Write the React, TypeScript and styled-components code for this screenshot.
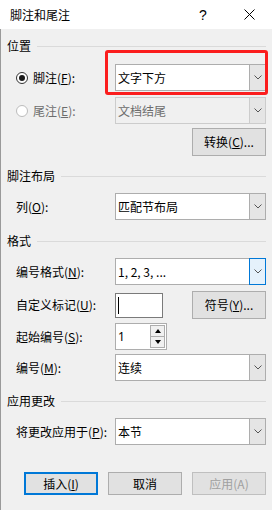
import React from "react";
import styled, { createGlobalStyle } from "styled-components";

const Global = createGlobalStyle`
  html, body { margin: 0; padding: 0; background: #f0f0f0; }
  * { box-sizing: border-box; }
`;

const Dialog = styled.div`
  position: relative;
  width: 272px;
  height: 510px;
  background: #f0f0f0;
  font-family: "Noto Sans CJK SC", "Noto Sans", sans-serif;
  font-size: 12px;
  color: #000;
  overflow: hidden;
`;

const TitleBar = styled.div`
  height: 29px;
  background: #fff;
  display: flex;
  align-items: center;
  padding-left: 10px;
`;

const Title = styled.span`
  flex: 1;
  font-size: 12px;
  line-height: 14px;
`;

const TitleButton = styled.span`
  width: 46px;
  height: 29px;
  display: flex;
  align-items: center;
  justify-content: center;
  font-family: "Liberation Sans", sans-serif;
  font-size: 14px;
`;

const Body = styled.div`
  height: 481px;
  border-left: 1px solid #9a9a9a;
  padding: 9px 6px 0 6px;
  display: flex;
  flex-direction: column;
`;

const SectionHeader = styled.div<{ $mt: number }>`
  display: flex;
  align-items: center;
  gap: 6px;
  height: 16px;
  margin-top: ${(p) => p.$mt}px;
  line-height: 16px;
  &::after {
    content: "";
    flex: 1;
    height: 1px;
    background: #dadada;
  }
`;

const Row = styled.div<{ $mt: number; $h?: number }>`
  display: grid;
  grid-template-columns: 108px 151px;
  align-items: center;
  height: ${(p) => p.$h ?? 27}px;
  margin-top: ${(p) => p.$mt}px;
`;

const Label = styled.span<{ $disabled?: boolean }>`
  display: flex;
  align-items: center;
  gap: 5px;
  padding-left: 9px;
  line-height: 14px;
  white-space: nowrap;
  color: ${(p) => (p.$disabled ? "#6d6d6d" : "#000")};
`;

const U = styled.span`
  text-decoration: underline;
  text-underline-offset: 1px;
`;

const Radio = styled.span<{ $checked?: boolean; $disabled?: boolean }>`
  position: relative;
  width: 12px;
  height: 12px;
  border-radius: 50%;
  background: #fff;
  border: 1px solid ${(p) => (p.$disabled ? "#bcbcbc" : "#333")};
  &::after {
    content: "";
    display: ${(p) => (p.$checked ? "block" : "none")};
    position: absolute;
    left: 2px;
    top: 2px;
    width: 6px;
    height: 6px;
    border-radius: 50%;
    background: #1a1a1a;
  }
`;

const Select = styled.div<{ $disabled?: boolean }>`
  display: flex;
  height: 27px;
  border: 1px solid ${(p) => (p.$disabled ? "#cccccc" : "#adadad")};
  background: ${(p) => (p.$disabled ? "#f0f0f0" : "#fff")};
  color: ${(p) => (p.$disabled ? "#6d6d6d" : "#000")};
`;

const SelectText = styled.span`
  flex: 1;
  display: flex;
  align-items: center;
  padding-left: 2px;
  line-height: 14px;
  white-space: nowrap;
`;

const ArrowBox = styled.span<{ $focused?: boolean; $disabled?: boolean }>`
  display: flex;
  align-items: center;
  justify-content: center;
  width: ${(p) => (p.$focused ? 17 : 16)}px;
  margin: ${(p) => (p.$focused ? "-1px -1px -1px 0" : "0")};
  border: ${(p) => (p.$focused ? "1px solid #0078d7" : "none")};
  border-left: 1px solid
    ${(p) => (p.$focused ? "#0078d7" : p.$disabled ? "#cccccc" : "#adadad")};
  background: ${(p) => (p.$focused ? "#e5f1fb" : "#e5e5e5")};
`;

const Button = styled.button<{ $w?: number; $h?: number; $default?: boolean; $disabled?: boolean }>`
  width: ${(p) => p.$w ?? 74}px;
  height: ${(p) => p.$h ?? 28}px;
  padding: 0;
  background: #e1e1e1;
  border: ${(p) =>
    p.$default ? "2px solid #0078d7" : `1px solid ${p.$disabled ? "#bfbfbf" : "#adadad"}`};
  color: ${(p) => (p.$disabled ? "#a0a0a0" : "#000")};
  font-family: inherit;
  font-size: 12px;
  line-height: 14px;
  display: flex;
  align-items: center;
  justify-content: center;
`;

const RightAlign = styled.div<{ $mt: number }>`
  display: flex;
  justify-content: flex-end;
  margin-top: ${(p) => p.$mt}px;
`;

const Control = styled.div`
  display: flex;
  align-items: center;
  justify-content: space-between;
`;

const TextInput = styled.div`
  position: relative;
  width: 48px;
  height: 25px;
  background: #fff;
  border: 1px solid #7a7a7a;
  &::after {
    content: "";
    position: absolute;
    left: 2px;
    top: 3px;
    width: 1px;
    height: 17px;
    background: #000;
  }
`;

const Spinner = styled.div`
  display: flex;
  width: 52px;
  height: 27px;
  background: #fff;
  border: 1px solid #adadad;
`;

const SpinText = styled.span`
  flex: 1;
  display: flex;
  align-items: center;
  padding-left: 2px;
  font-family: "Noto Sans", sans-serif;
`;

const SpinButtons = styled.div`
  display: flex;
  flex-direction: column;
  width: 16px;
  padding: 1px 1px 1px 0;
`;

const SpinButton = styled.span`
  flex: 1;
  display: flex;
  align-items: center;
  justify-content: center;
  background: #f0f0f0;
  border: 1px solid #adadad;
  & + & {
    border-top: none;
  }
`;

const Footer = styled.div`
  display: flex;
  justify-content: flex-end;
  gap: 10px;
  margin-top: 27px;
`;

const Highlight = styled.div`
  position: absolute;
  left: 105px;
  top: 50px;
  width: 163px;
  height: 45px;
  border: 3.5px solid #fb1d1d;
  border-radius: 3px;
  pointer-events: none;
`;

const Chevron = () => (
  <svg width="8" height="5" viewBox="0 0 8 5">
    <polyline points="0.5,0.5 4,4 7.5,0.5" fill="none" stroke="#555" strokeWidth="1" />
  </svg>
);

const Tri = ({ up }: { up?: boolean }) => (
  <svg width="6" height="4" viewBox="0 0 6 4">
    <polygon points={up ? "0,4 6,4 3,0" : "0,0 6,0 3,4"} fill="#000" />
  </svg>
);

const Dropdown = ({
  value,
  disabled,
  focused,
}: {
  value: string;
  disabled?: boolean;
  focused?: boolean;
}) => (
  <Select $disabled={disabled}>
    <SelectText>{value}</SelectText>
    <ArrowBox $focused={focused} $disabled={disabled}>
      <Chevron />
    </ArrowBox>
  </Select>
);

export default function App() {
  return (
    <Dialog>
      <Global />
      <TitleBar>
        <Title>脚注和尾注</Title>
        <TitleButton>?</TitleButton>
        <TitleButton>
          <svg width="11" height="11" viewBox="0 0 11 11">
            <path d="M0.5 0.5 L10.5 10.5 M10.5 0.5 L0.5 10.5" stroke="#000" strokeWidth="1" />
          </svg>
        </TitleButton>
      </TitleBar>
      <Body>
        <SectionHeader $mt={0}>位置</SectionHeader>
        <Row $mt={10}>
          <Label>
            <Radio $checked />
            <span>
              脚注(<U>F</U>):
            </span>
          </Label>
          <Dropdown value="文字下方" />
        </Row>
        <Row $mt={6}>
          <Label $disabled>
            <Radio $disabled />
            <span>
              尾注(<U>E</U>):
            </span>
          </Label>
          <Dropdown value="文档结尾" disabled />
        </Row>
        <RightAlign $mt={4}>
          <Button>
            转换(<U>C</U>)...
          </Button>
        </RightAlign>

        <SectionHeader $mt={12}>脚注布局</SectionHeader>
        <Row $mt={9}>
          <Label>
            <span>
              列(<U>O</U>):
            </span>
          </Label>
          <Dropdown value="匹配节布局" />
        </Row>

        <SectionHeader $mt={13}>格式</SectionHeader>
        <Row $mt={9}>
          <Label>
            <span>
              编号格式(<U>N</U>):
            </span>
          </Label>
          <Dropdown value="1, 2, 3, ..." focused />
        </Row>
        <Row $mt={6} $h={28}>
          <Label>
            <span>
              自定义标记(<U>U</U>):
            </span>
          </Label>
          <Control>
            <TextInput />
            <Button>
              符号(<U>Y</U>)...
            </Button>
          </Control>
        </Row>
        <Row $mt={4}>
          <Label>
            <span>
              起始编号(<U>S</U>):
            </span>
          </Label>
          <Control>
            <Spinner>
              <SpinText>1</SpinText>
              <SpinButtons>
                <SpinButton>
                  <Tri up />
                </SpinButton>
                <SpinButton>
                  <Tri />
                </SpinButton>
              </SpinButtons>
            </Spinner>
          </Control>
        </Row>
        <Row $mt={4}>
          <Label>
            <span>
              编号(<U>M</U>):
            </span>
          </Label>
          <Dropdown value="连续" />
        </Row>

        <SectionHeader $mt={12}>应用更改</SectionHeader>
        <Row $mt={9}>
          <Label>
            <span>
              将更改应用于(<U>P</U>):
            </span>
          </Label>
          <Dropdown value="本节" />
        </Row>

        <Footer>
          <Button $h={23} $default>
            插入(<U>I</U>)
          </Button>
          <Button $h={23}>取消</Button>
          <Button $h={23} $disabled>
            应用(A)
          </Button>
        </Footer>
      </Body>
      <Highlight />
    </Dialog>
  );
}
